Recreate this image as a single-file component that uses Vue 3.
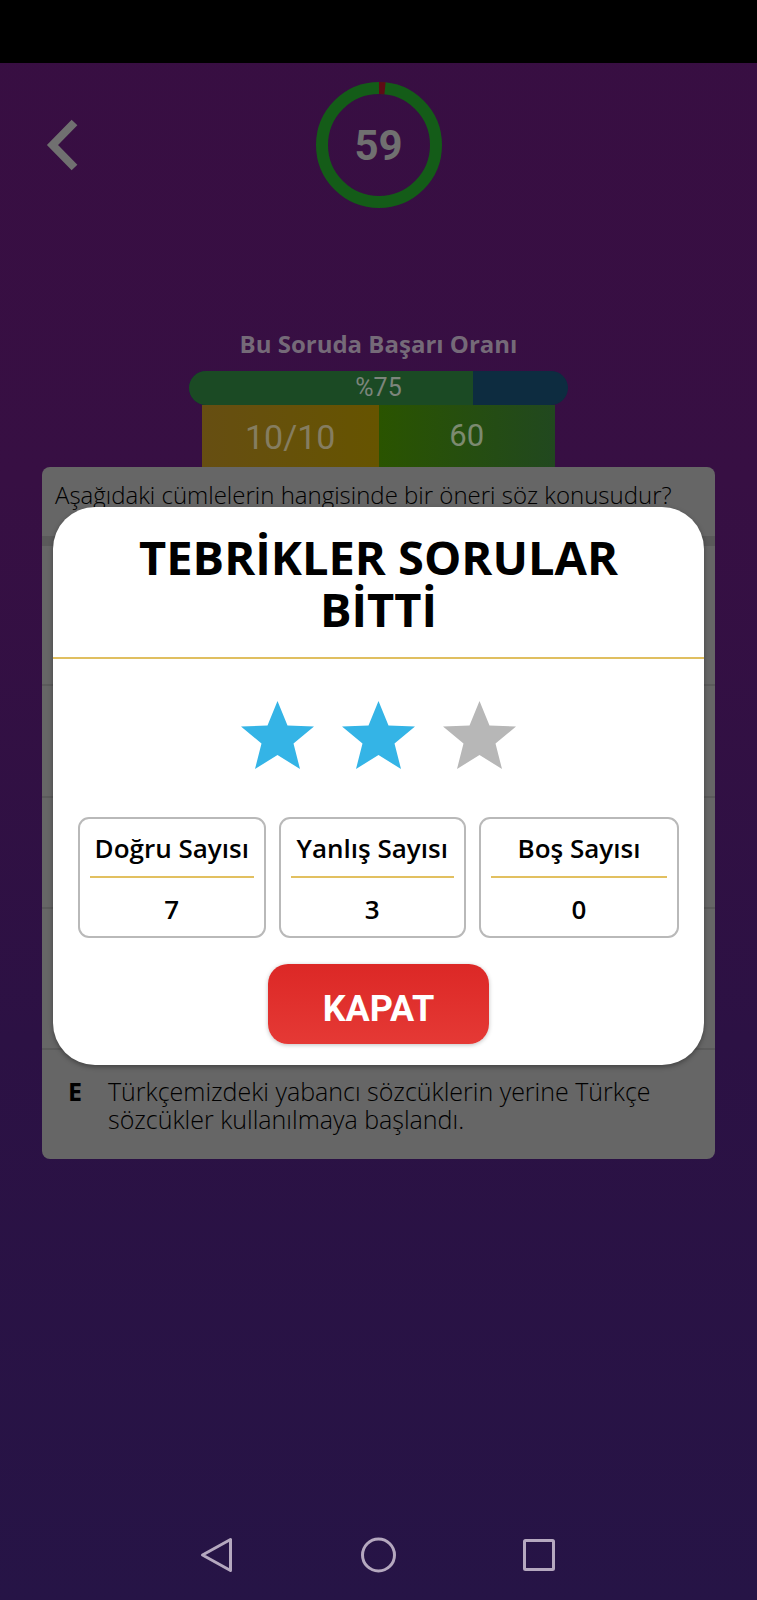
<script setup>
const rows = ['A', 'B', 'C', 'D']
const stars = [true, true, false]
const results = [
  { label: 'Doğru Sayısı', value: 7 },
  { label: 'Yanlış Sayısı', value: 3 },
  { label: 'Boş Sayısı', value: 0 },
]
const successRate = 75
</script>

<template>
  <div class="screen">
    <div class="status-bar"></div>

    <header class="top">
      <button class="back" type="button" aria-label="Geri">
        <svg width="32" height="52" viewBox="0 0 32 52">
          <path d="M28.500 3.500 L6.500 26 L28.500 48.500" fill="none" stroke="#707070" stroke-width="8" />
        </svg>
      </button>
      <div class="timer">
        <svg width="126" height="126" viewBox="0 0 126 126">
          <circle cx="63" cy="63" r="57" fill="none" stroke="#145c18" stroke-width="12" />
          <path d="M63 6 A57 57 0 0 1 69 6.300" fill="none" stroke="#5e0c15" stroke-width="12" />
        </svg>
        <span class="seconds">59</span>
      </div>
    </header>

    <main class="quiz">
      <h2 class="rate-title">Bu Soruda Başarı Oranı</h2>
      <div class="rate">
        <div class="rate-fill" :style="{ width: successRate + '%' }"></div>
        <span class="rate-text">%{{ successRate }}</span>
      </div>
      <div class="counters">
        <div class="counter order">10/10</div>
        <div class="counter time">60</div>
      </div>

      <section class="card">
        <p class="question">Aşağıdaki cümlelerin hangisinde bir öneri söz konusudur?</p>
        <div v-for="row in rows" :key="row" class="option" :class="'option-' + row.toLowerCase()"></div>
        <div class="option last">
          <b class="letter">E</b>
          <span class="answer">Türkçemizdeki yabancı sözcüklerin yerine Türkçe sözcükler kullanılmaya başlandı.</span>
        </div>
      </section>
    </main>

    <nav class="system-nav">
      <button type="button" aria-label="Geri git">
        <svg width="36" height="36" viewBox="0 0 36 36">
          <path d="M30.500 2.500 V33.500 L2.500 18 Z" fill="none" stroke="#b5a8bf" stroke-width="3" stroke-linejoin="round" />
        </svg>
      </button>
      <button type="button" aria-label="Ana ekran">
        <svg width="36" height="36" viewBox="0 0 36 36">
          <circle cx="17.500" cy="18" r="16" fill="none" stroke="#b5a8bf" stroke-width="3" />
        </svg>
      </button>
      <button type="button" aria-label="Son uygulamalar">
        <svg width="36" height="36" viewBox="0 0 36 36">
          <rect x="2.500" y="3.500" width="29" height="29" rx="1" fill="none" stroke="#b5a8bf" stroke-width="3" />
        </svg>
      </button>
    </nav>

    <div class="overlay">
      <section class="dialog" role="dialog" aria-labelledby="dialog-title">
        <h1 id="dialog-title" class="dialog-title">TEBRİKLER SORULAR BİTTİ</h1>
        <div class="stars">
          <svg v-for="(on, i) in stars" :key="i" width="73" height="68" viewBox="0 0 73 68">
            <path
              d="M36.500 0 L46.500 24.500 L73 25.500 L52.500 42.500 L59 68 L36.500 54 L14 68 L20.500 42.500 L0 25.500 L26.500 24.500 Z"
              :fill="on ? '#34b4e6' : '#b7b7b7'"
            />
          </svg>
        </div>
        <div class="results">
          <div v-for="r in results" :key="r.label" class="result">
            <div class="result-label">{{ r.label }}</div>
            <div class="result-value">{{ r.value }}</div>
          </div>
        </div>
        <button class="close" type="button">KAPAT</button>
      </section>
    </div>
  </div>
</template>

<style>
body {
  margin: 0;
}
</style>

<style scoped>
.screen {
  position: relative;
  display: flex;
  flex-direction: column;
  min-height: 100vh;
  background: linear-gradient(#380e42 0, #370f43 30%, #2c1144 65%, #261446 100%);
  font-family: "Open Sans", "Noto Sans", sans-serif;
  color: #000;
}
.screen * {
  box-sizing: border-box;
}
button {
  padding: 0;
  border: 0;
  background: none;
}
svg {
  display: block;
}
.status-bar {
  height: 63px;
  background: #000;
}
.top {
  display: grid;
  grid-template-columns: 1fr auto 1fr;
  align-items: center;
  padding: 19px 46px 0;
}
.back {
  justify-self: start;
}
.timer {
  display: grid;
  place-items: center;
}
.timer > * {
  grid-area: 1 / 1;
}
.seconds {
  padding-top: 2px;
  font: 700 42px/50px Roboto, sans-serif;
  color: #707070;
}
.quiz {
  flex: 1;
  margin-top: 120px;
}
.rate-title {
  margin: 0 0 11px;
  font-size: 24px;
  line-height: 32px;
  font-weight: 700;
  text-align: center;
  color: #756a78;
}
.rate {
  display: grid;
  width: 50%;
  height: 34px;
  margin: 0 auto;
  border-radius: 17px;
  background: #0d2c40;
  overflow: hidden;
}
.rate > * {
  grid-area: 1 / 1;
}
.rate-fill {
  background: #1b4a24;
}
.rate-text {
  text-align: center;
  font: 400 25px/34px Roboto, sans-serif;
  color: #7c857c;
}
.counters {
  display: grid;
  grid-template-columns: 1fr 1fr;
  padding: 0 202px;
}
.counter {
  height: 62px;
  text-align: center;
  font: 400 34px/64px Roboto, sans-serif;
}
.order {
  background: linear-gradient(90deg, #664e12, #665400);
  color: #857d60;
}
.time {
  font-size: 31px;
  line-height: 62px;
  background: linear-gradient(90deg, #2a5400, #21481f);
  color: #7c8a70;
}
.card {
  margin: 0 42px;
  border-radius: 8px;
  background: #666;
  overflow: hidden;
}
.question {
  height: 79px;
  margin: 0;
  padding: 10px 13px;
  border-bottom: 10px solid #5a5a5a;
  font-size: 24px;
  line-height: 36px;
  font-weight: 300;
  white-space: nowrap;
}
.option {
  min-height: 111px;
  border-bottom: 2px solid #5b5b5b;
}
.option-a {
  min-height: 140px;
}
.option-b {
  min-height: 112px;
}
.option-d {
  min-height: 141px;
}
.last {
  display: flex;
  min-height: 0;
  padding: 27px 26px 26px;
  border: 0;
  font-size: 25px;
  line-height: 28px;
}
.letter {
  width: 40px;
}
.answer {
  flex: 1;
  font-weight: 300;
}
.system-nav {
  display: flex;
  justify-content: center;
  gap: 125px;
  padding-bottom: 27px;
}
.overlay {
  position: absolute;
  inset: 0;
  display: grid;
  align-items: center;
  padding: 0 53px 28px;
}
.dialog {
  border-radius: 42px;
  background: #fff;
  box-shadow: 0 2px 5px rgba(0, 0, 0, 0.35);
  text-align: center;
}
.dialog-title {
  margin: 0;
  padding: 24px 60px 22px;
  border-bottom: 2px solid #e0bf60;
  font-size: 47px;
  line-height: 52px;
  font-weight: 700;
}
.stars {
  display: flex;
  justify-content: center;
  gap: 28px;
  padding: 42px 0 48px;
}
.results {
  display: grid;
  grid-template-columns: 15fr 15fr 16fr;
  gap: 13px;
  padding: 0 25px;
}
.result {
  padding: 10px 10px 8px;
  border: 2px solid #b9b9b9;
  border-radius: 11px;
  font-size: 26px;
  font-weight: 600;
}
.result-label {
  padding-bottom: 9px;
  border-bottom: 2px solid #e2c060;
  line-height: 38px;
  white-space: nowrap;
}
.result-value {
  padding-top: 12px;
  line-height: 38px;
}
.close {
  width: 221px;
  height: 80px;
  margin: 26px 0 21px;
  padding-top: 10px;
  border-radius: 20px;
  background: linear-gradient(#dc2826, #e53935);
  box-shadow: 0 1px 4px rgba(0, 0, 0, 0.25);
  font: 700 36px/40px Roboto, sans-serif;
  color: #fff;
}
</style>
